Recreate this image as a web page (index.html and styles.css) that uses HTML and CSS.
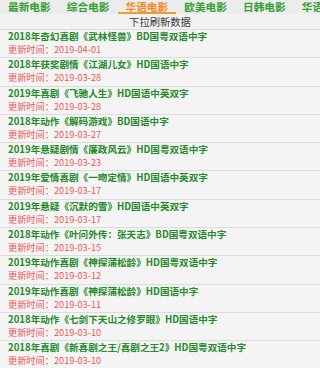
FILE: index.html
```html
<!DOCTYPE html>
<html lang="zh">
<head>
<meta charset="utf-8">
<link rel="stylesheet" href="styles.css">
</head>
<body>
<div class="tabs">
  <div class="tab">最新电影</div>
  <div class="tab">综合电影</div>
  <div class="tab active">华语电影</div>
  <div class="tab">欧美电影</div>
  <div class="tab">日韩电影</div>
  <div class="tab">华语电影</div>
</div>
<div class="refresh">下拉刷新数据</div>
<ul class="list">
  <li class="item"><div class="title">2018年奇幻喜剧《武林怪兽》BD国粤双语中字</div><div class="date">更新时间：2019-04-01</div></li>
  <li class="item"><div class="title">2018年获奖剧情《江湖儿女》HD国语中字</div><div class="date">更新时间：2019-03-28</div></li>
  <li class="item"><div class="title">2019年喜剧《飞驰人生》HD国语中英双字</div><div class="date">更新时间：2019-03-28</div></li>
  <li class="item"><div class="title">2018年动作《解码游戏》BD国语中字</div><div class="date">更新时间：2019-03-27</div></li>
  <li class="item"><div class="title">2019年悬疑剧情《廉政风云》HD国粤双语中字</div><div class="date">更新时间：2019-03-23</div></li>
  <li class="item"><div class="title">2019年爱情喜剧《一吻定情》HD国语中英双字</div><div class="date">更新时间：2019-03-17</div></li>
  <li class="item"><div class="title">2019年悬疑《沉默的雪》HD国语中英双字</div><div class="date">更新时间：2019-03-17</div></li>
  <li class="item"><div class="title">2018年动作《叶问外传：张天志》BD国粤双语中字</div><div class="date">更新时间：2019-03-15</div></li>
  <li class="item"><div class="title">2019年动作喜剧《神探蒲松龄》HD国粤双语中字</div><div class="date">更新时间：2019-03-12</div></li>
  <li class="item"><div class="title">2019年动作喜剧《神探蒲松龄》HD国语中字</div><div class="date">更新时间：2019-03-11</div></li>
  <li class="item"><div class="title">2018年动作《七剑下天山之修罗眼》HD国语中字</div><div class="date">更新时间：2019-03-10</div></li>
  <li class="item"><div class="title">2018年喜剧《新喜剧之王/喜剧之王2》HD国粤双语中字</div><div class="date">更新时间：2019-03-10</div></li>
</ul>
</body>
</html>
```
FILE: styles.css
```css
html, body {
  margin: 0;
  padding: 0;
  background: #f4f4f4;
  font-family: "Noto Sans CJK SC", "Noto Sans", sans-serif;
  width: 320px;
  height: 368px;
  overflow: hidden;
}
.tabs {
  display: flex;
  height: 14px;
  background: #ececec;
  overflow: hidden;
  white-space: nowrap;
}
.tab {
  flex: 0 0 58.75px;
  height: 14px;
  text-align: center;
  font-size: 10.7px;
  line-height: 13px;
  font-weight: bold;
  color: #34a034;
}
.tab.active {
  color: #f08a1e;
  box-shadow: inset 0 -2px 0 #f39a30;
}
.refresh {
  box-sizing: border-box;
  height: 16px;
  padding-top: 1px;
  line-height: 14px;
  text-align: center;
  font-size: 10.3px;
  color: #3a3a3a;
  background: #f2f2f2;
  border-bottom: 1px solid #dddddd;
}
.list {
  list-style: none;
  margin: 0;
  padding: 0;
}
.item {
  box-sizing: border-box;
  height: 28.3px;
  padding: 0 0 0 8px;
  border-bottom: 1px solid #dcdcdc;
}
.title {
  font-size: 9.6px;
  line-height: 13px;
  font-weight: bold;
  color: #248a2a;
}
.date {
  font-size: 9.2px;
  line-height: 13px;
  color: #f25555;
}
```
